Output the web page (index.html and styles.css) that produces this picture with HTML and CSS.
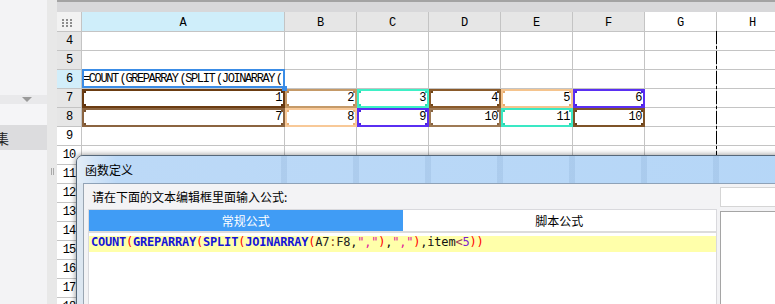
FILE: index.html
```html
<!DOCTYPE html>
<html lang="zh-CN">
<head>
<meta charset="utf-8">
<title>函数定义</title>
<link rel="stylesheet" href="styles.css">
</head>
<body>
<div class="app">
  <aside class="sidebar">
    <div class="sb-top"></div>
    <div class="sb-arrow"><span class="tri"></span></div>
    <div class="sb-gap"></div>
    <div class="sb-item"><span>集</span></div>
  </aside>
  <div class="splitter"><span class="grip"></span></div>
  <main class="sheet">
    <div class="tabband"></div>
    <div class="grid">
      <div class="c corner"><svg width="10" height="8" viewBox="0 0 10 8"><g fill="#8c8c8c"><rect x="0" y="0" width="2" height="2"/><rect x="4" y="0" width="2" height="2"/><rect x="8" y="0" width="2" height="2"/><rect x="0" y="3" width="2" height="2"/><rect x="4" y="3" width="2" height="2"/><rect x="8" y="3" width="2" height="2"/><rect x="0" y="6" width="2" height="2"/><rect x="4" y="6" width="2" height="2"/><rect x="8" y="6" width="2" height="2"/></g></svg></div>
      <div class="c ch selc">A</div><div class="c ch">B</div><div class="c ch">C</div><div class="c ch">D</div><div class="c ch">E</div><div class="c ch">F</div><div class="c ch free">G</div><div class="c ch free">H</div>

      <div class="c rh used">4</div><div class="c"></div><div class="c"></div><div class="c"></div><div class="c"></div><div class="c"></div><div class="c"></div><div class="c"></div><div class="c"></div>
      <div class="c rh used">5</div><div class="c"></div><div class="c"></div><div class="c"></div><div class="c"></div><div class="c"></div><div class="c"></div><div class="c"></div><div class="c"></div>
      <div class="c rh selr">6</div><div class="c sel"><span class="ftext">=COUNT (GREPARRAY (SPLIT (JOINARRAY (</span></div><div class="c"></div><div class="c"></div><div class="c"></div><div class="c"></div><div class="c"></div><div class="c"></div><div class="c"></div>
      <div class="c rh used">7</div><div class="c num hl a7">1</div><div class="c num hl b7">2</div><div class="c num hl c7">3</div><div class="c num hl d7">4</div><div class="c num hl e7">5</div><div class="c num hl f7">6</div><div class="c"></div><div class="c"></div>
      <div class="c rh used">8</div><div class="c num hl a8">7</div><div class="c num hl b8">8</div><div class="c num hl c8">9</div><div class="c num hl d8">10</div><div class="c num hl e8">11</div><div class="c num hl f8">10</div><div class="c"></div><div class="c"></div>
      <div class="c rh">9</div><div class="c"></div><div class="c"></div><div class="c"></div><div class="c"></div><div class="c"></div><div class="c"></div><div class="c"></div><div class="c"></div>
      <div class="c rh">10</div><div class="c"></div><div class="c"></div><div class="c"></div><div class="c"></div><div class="c"></div><div class="c"></div><div class="c"></div><div class="c"></div>
      <div class="c rh">11</div><div class="c"></div><div class="c"></div><div class="c"></div><div class="c"></div><div class="c"></div><div class="c"></div><div class="c"></div><div class="c"></div>
      <div class="c rh">12</div><div class="c"></div><div class="c"></div><div class="c"></div><div class="c"></div><div class="c"></div><div class="c"></div><div class="c"></div><div class="c"></div>
      <div class="c rh">13</div><div class="c"></div><div class="c"></div><div class="c"></div><div class="c"></div><div class="c"></div><div class="c"></div><div class="c"></div><div class="c"></div>
      <div class="c rh">14</div><div class="c"></div><div class="c"></div><div class="c"></div><div class="c"></div><div class="c"></div><div class="c"></div><div class="c"></div><div class="c"></div>
      <div class="c rh">15</div><div class="c"></div><div class="c"></div><div class="c"></div><div class="c"></div><div class="c"></div><div class="c"></div><div class="c"></div><div class="c"></div>
      <div class="c rh">16</div><div class="c"></div><div class="c"></div><div class="c"></div><div class="c"></div><div class="c"></div><div class="c"></div><div class="c"></div><div class="c"></div>
      <div class="c rh">17</div><div class="c"></div><div class="c"></div><div class="c"></div><div class="c"></div><div class="c"></div><div class="c"></div><div class="c"></div><div class="c"></div>
      <div class="c rh">18</div><div class="c"></div><div class="c"></div><div class="c"></div><div class="c"></div><div class="c"></div><div class="c"></div><div class="c"></div><div class="c"></div>
    </div>
    <div class="pagebreak"></div>
  </main>

  <section class="dialog">
    <div class="dlg-title">函数定义</div>
    <div class="dlg-client">
      <div class="dlg-main">
        <div class="prompt">请在下面的文本编辑框里面输入公式:</div>
        <div class="tabs-box">
          <div class="tabs">
            <div class="tab on">常规公式</div>
            <div class="tab">脚本公式</div>
          </div>
          <div class="editor">
            <div class="line"><span class="fn">COUNT</span><span class="pr">(</span><span class="fn">GREPARRAY</span><span class="pr">(</span><span class="fn">SPLIT</span><span class="pr">(</span><span class="fn">JOINARRAY</span><span class="pr">(</span><span class="rf">A7</span><span class="op">:</span><span class="rf">F8</span>,<span class="st">","</span><span class="pr">)</span>,<span class="st">","</span><span class="pr">)</span>,item<span class="lt">&lt;</span><span class="nm">5</span><span class="pr">))</span></div>
          </div>
        </div>
      </div>
      <div class="dlg-side">
        <div class="side-input"></div>
        <div class="side-box"></div>
      </div>
    </div>
  </section>
</div>
</body>
</html>
```

FILE: styles.css
```css
html, body {
  margin: 0;
  padding: 0;
}
body {
  width: 775px;
  height: 304px;
  overflow: hidden;
  font-family: "Noto Sans CJK SC", "Noto Sans", sans-serif;
}
.app {
  position: relative;
  display: grid;
  grid-template-columns: 47px 10px 1fr;
  height: 304px;
  overflow: hidden;
  background: #f3f3f5;
}

/* sidebar */
.sidebar {
  display: flex;
  flex-direction: column;
  background: #f3f3f5;
}
.sb-top { height: 95px; }
.sb-arrow {
  height: 9px;
  background: #e9e9eb;
  display: flex;
  justify-content: flex-end;
  align-items: center;
  padding-right: 15px;
}
.tri {
  width: 0;
  height: 0;
  border-left: 5px solid transparent;
  border-right: 5px solid transparent;
  border-top: 5px solid #9a9a9a;
}
.sb-gap { height: 21px; background: #f5f5f7; }
.sb-item {
  height: 25px;
  background: #dcdcde;
  display: flex;
  align-items: center;
  font-size: 14px;
  color: #222;
  overflow: hidden;
}
.sb-item span { margin-left: -5px; }

.splitter {
  background: #e8e8e8;
  display: flex;
  justify-content: center;
  align-items: flex-start;
  padding-top: 168px;
}
.grip {
  width: 1px;
  height: 7px;
  border-left: 1px solid #a9a9a9;
  border-right: 1px solid #a9a9a9;
}

/* sheet */
.sheet {
  position: relative;
  overflow: hidden;
  background: #fff;
  display: flex;
  flex-direction: column;
}
.tabband {
  flex: none;
  height: 12px;
  box-sizing: border-box;
  background: #d8d8da;
  border-top: 2px solid #a3a3a3;
}
.grid {
  display: grid;
  grid-template-columns: 25px 203px repeat(7, 72px);
  grid-template-rows: 20px;
  grid-auto-rows: 19px;
}
.c {
  box-sizing: border-box;
  border-right: 1px solid #c4c4c4;
  border-bottom: 1px solid #c4c4c4;
  font-family: "Liberation Mono", monospace;
  font-size: 12px;
  line-height: 18px;
  color: #000;
  white-space: nowrap;
}
.corner {
  background: #f2f2f2;
  padding: 7px 0 0 5px;
  line-height: 0;
}
.ch {
  background: #e6e6e6;
  text-align: center;
  padding-top: 2px;
}
.ch.selc { background: #cfeefa; }
.ch.free { background: #fff; }
.rh {
  background: #fff;
  text-align: center;
  letter-spacing: -1px;
}
.rh.used { background: #e6e6e6; }
.rh.selr { background: #d2eefa; }

.num {
  text-align: right;
  padding-right: 2px;
  letter-spacing: -0.5px;
}

.sel {
  position: relative;
  z-index: 2;
  padding-left: 1px;
}
.sel::after {
  content: "";
  position: absolute;
  top: -1px;
  left: 0;
  right: -1px;
  bottom: 0;
  border: 2px solid #3a8ce6;
}
.sel::before {
  content: "";
  position: absolute;
  right: -3px;
  bottom: -3px;
  width: 5px;
  height: 5px;
  background: #3a8ce6;
  z-index: 1;
}
.ftext {
  letter-spacing: -1.4px;
  word-spacing: -4px;
}

.hl { position: relative; }
.hl::after {
  content: "";
  position: absolute;
  top: 0;
  left: 0;
  right: -1px;
  bottom: -1px;
  border: 2px solid var(--c);
  background:
    linear-gradient(var(--k), var(--k)) left top / 4px 4px no-repeat,
    linear-gradient(var(--k), var(--k)) right top / 4px 4px no-repeat,
    linear-gradient(var(--k), var(--k)) left bottom / 4px 4px no-repeat,
    linear-gradient(var(--k), var(--k)) right bottom / 4px 4px no-repeat;
  background-origin: border-box;
  background-clip: border-box;
}
.a7 { --c: #6b3c12; --k: #573010; }
.b7 { --c: #c59a68; --k: #b3844f; }
.c7 { --c: #3ef0c6; --k: #2cd9b0; }
.d7 { --c: #8a5a2a; --k: #6f4518; }
.e7 { --c: #f5c48e; --k: #e6ab6e; }
.f7 { --c: #5a2ff2; --k: #4a20e0; }
.a8 { --c: #8b6440; --k: #78522f; }
.b8 { --c: #f8c998; --k: #eab27a; }
.c8 { --c: #5a2ff2; --k: #4a20e0; }
.d8 { --c: #9e7a55; --k: #876240; }
.e8 { --c: #3ae8c4; --k: #28d2ac; }
.f8 { --c: #7e5328; --k: #674018; }

.pagebreak {
  position: absolute;
  left: 659px;
  top: 31px;
  width: 1px;
  height: 280px;
  background: repeating-linear-gradient(to bottom, #000 0 13px, transparent 13px 15px, #000 15px 18px, transparent 18px 20px);
}

/* dialog */
.dialog {
  position: absolute;
  left: 76px;
  top: 155px;
  width: 760px;
  height: 190px;
  border: 1px solid #56687a;
  border-top-left-radius: 7px;
  background: #dde7f1;
  box-shadow: 0 0 5px 1px rgba(0, 0, 0, 0.35);
  display: flex;
  flex-direction: column;
  font-family: "Noto Sans CJK SC", "Noto Sans", sans-serif;
  font-size: 12px;
  color: #000;
}
.dlg-title {
  flex: none;
  height: 27px;
  line-height: 27px;
  padding-left: 8px;
  border-top-left-radius: 6px;
  background:
    repeating-linear-gradient(90deg, transparent 0 60px, rgba(60, 100, 150, 0.1) 60px 66px, transparent 66px 72px) 144px 0 / 700px 100% no-repeat,
    linear-gradient(90deg, #e3edf7 0, #bcd9f7 40px, #b5d6f7 100%);
}
.dlg-client {
  flex: 1;
  margin-left: 6px;
  border-left: 1px solid #9aa6b2;
  border-top: 1px solid #8ea2b8;
  background: #f3f3f5;
  display: flex;
}
.dlg-main {
  flex: none;
  width: 633px;
}
.prompt {
  padding: 5px 0 0 8px;
  height: 16px;
  line-height: 16px;
}
.tabs-box {
  margin: 4px 0 0 4px;
  border: 1px solid #d9d9dd;
  background: #fff;
}
.tabs {
  display: flex;
  height: 21px;
}
.tab {
  flex: 1;
  text-align: center;
  line-height: 21px;
  background: #fff;
}
.tab.on {
  background: #409cf5;
  color: #fff;
}
.editor {
  border-top: 2px solid #dcdcdc;
  padding-top: 3px;
  height: 100px;
}
.line {
  height: 16px;
  background: #ffffaa;
  padding-left: 2px;
  font-family: "DejaVu Sans Mono", monospace;
  font-size: 12px;
  line-height: 12px;
  letter-spacing: -0.22px;
  white-space: nowrap;
  color: #111;
}
.fn { color: #1515d8; font-weight: bold; }
.pr { color: #ff0000; }
.rf { color: #222; }
.op { color: #8b4513; }
.st { color: #e0209a; }
.lt { color: #a03c5a; }
.nm { color: #7a1fd0; }

.dlg-side {
  flex: 1;
  margin-left: 3px;
  padding-top: 3px;
}
.side-input {
  height: 20px;
  box-sizing: border-box;
  border: 1px solid #d5d5d5;
  background: #fff;
}
.side-box {
  margin-top: 4px;
  height: 150px;
  border: 1px solid #a5a5a5;
  background: #fff;
}
```
